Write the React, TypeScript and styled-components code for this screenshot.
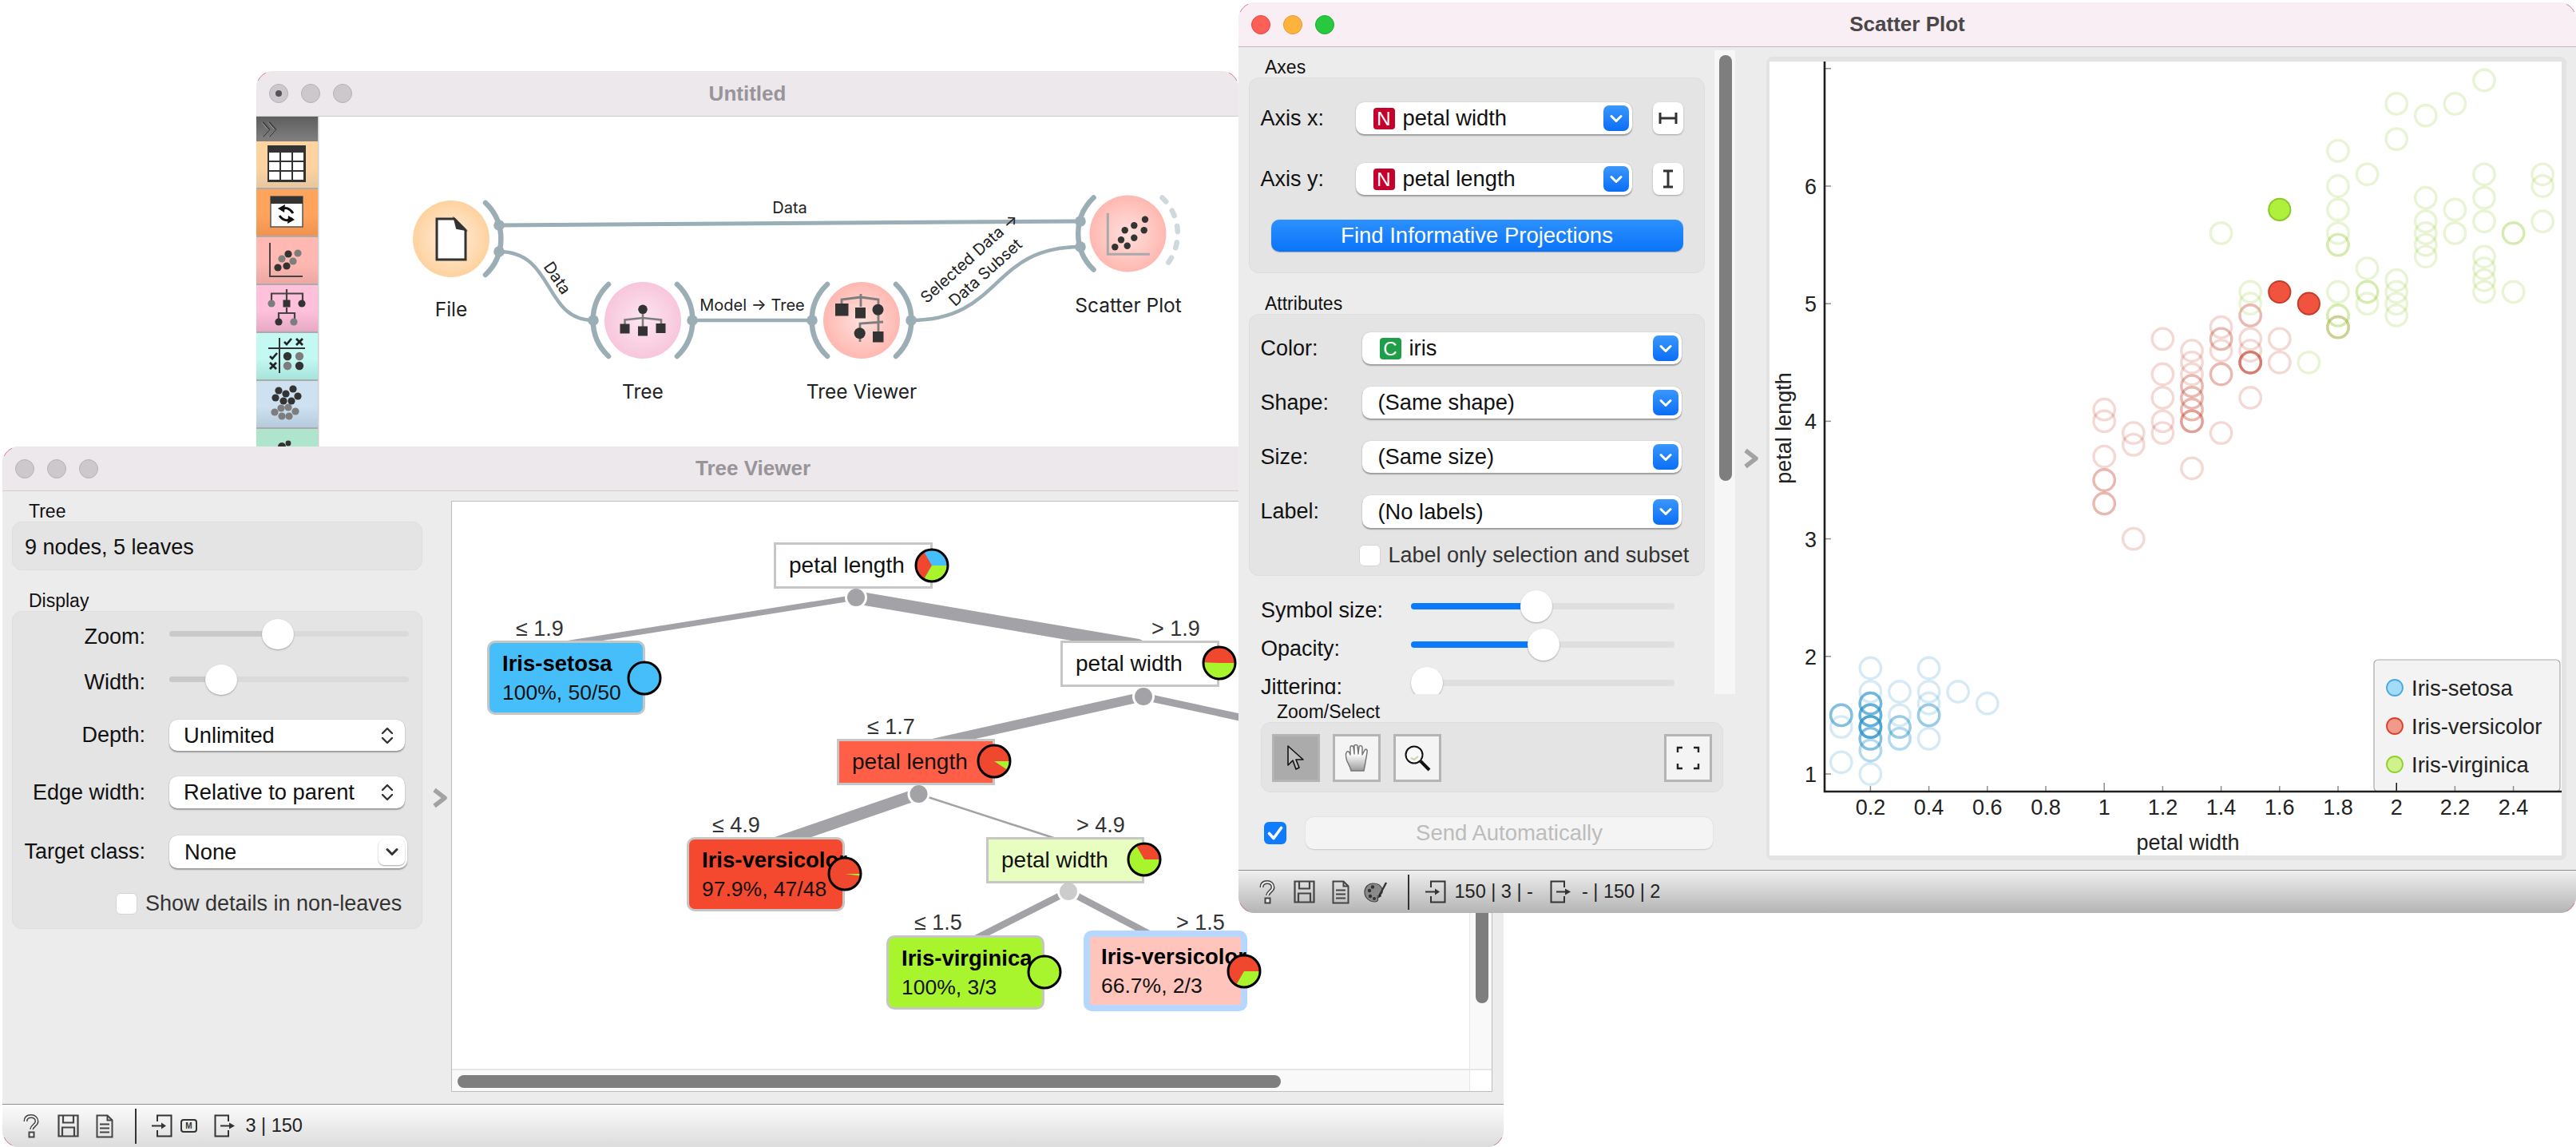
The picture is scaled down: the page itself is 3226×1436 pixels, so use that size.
import React from 'react';
import styled, { createGlobalStyle } from 'styled-components';

const UI = `"Liberation Sans", Arial, sans-serif`;
const CANVAS = `Inter, "Liberation Sans", sans-serif`;

const Global = createGlobalStyle`
  html, body { margin: 0; padding: 0; background: #fff; }
  body { font-family: ${UI}; color: #111; }
  #root { width: 3226px; height: 1436px; }
`;

const Desktop = styled.div`
  position: relative;
  width: 3226px;
  height: 1436px;
  overflow: hidden;
  background: #fff;
`;

const Window = styled.section<{ $x: number; $y: number; $w: number; $h: number; $z: number }>`
  position: absolute;
  left: ${p => p.$x}px;
  top: ${p => p.$y}px;
  width: ${p => p.$w}px;
  height: ${p => p.$h}px;
  z-index: ${p => p.$z};
  display: flex;
  flex-direction: column;
  border-radius: 20px;
  overflow: hidden;
  background: #ececec;

  &::after {
    content: '';
    position: absolute;
    inset: 0;
    z-index: 5;
    pointer-events: none;
    border: 1.5px solid #d9669f;
    border-radius: 20px;
    mask:
      linear-gradient(#000 0 0) top left / 12px 12px no-repeat,
      linear-gradient(#000 0 0) top right / 12px 12px no-repeat,
      linear-gradient(#000 0 0) bottom left / 12px 12px no-repeat,
      linear-gradient(#000 0 0) bottom right / 12px 12px no-repeat;
  }
`;

const TitleBar = styled.header<{ $focused?: boolean; $h: number }>`
  flex: 0 0 ${p => p.$h}px;
  box-sizing: border-box;
  display: grid;
  grid-template-columns: 1fr auto 1fr;
  align-items: center;
  padding: 0 16px;
  background: ${p => (p.$focused ? '#f9eef3' : '#ece8eb')};
  border-bottom: 1.5px solid ${p => (p.$focused ? '#bdb9bb' : '#cfcccd')};
`;

const Lights = styled.div`
  display: flex;
  gap: 16px;
`;

const Light = styled.span<{ $c: string; $b: string }>`
  width: 24px;
  height: 24px;
  box-sizing: border-box;
  border-radius: 50%;
  display: flex;
  align-items: center;
  justify-content: center;
  background: ${p => p.$c};
  border: 1px solid ${p => p.$b};
`;

const LightDot = styled.span`
  width: 8px;
  height: 8px;
  border-radius: 50%;
  background: #55525a;
`;

const WindowTitle = styled.h1<{ $focused?: boolean }>`
  margin: 0;
  font: bold 26px ${UI};
  color: ${p => (p.$focused ? '#4a4749' : '#98949a')};
`;

const StatusBar = styled.footer<{ $focused?: boolean }>`
  flex: 0 0 54px;
  box-sizing: border-box;
  display: flex;
  align-items: center;
  padding-left: 13px;
  border-top: 1.5px solid #8f8f8f;
  background: ${p =>
    p.$focused ? 'linear-gradient(#efefef, #b4b4b4)' : 'linear-gradient(#fbfbfb, #dcdcdc)'};
  font-size: 23.5px;
`;

const Slot = styled.span<{ $w: number; $ml?: number }>`
  flex: 0 0 ${p => p.$w}px;
  margin-left: ${p => p.$ml ?? 0}px;
  display: flex;
  align-items: center;
  justify-content: center;
`;

const StatusSep = styled.span<{ $ml: number }>`
  flex: 0 0 1.5px;
  height: 44px;
  margin-left: ${p => p.$ml}px;
  background: #333;
`;

const StatusText = styled.span<{ $ml: number }>`
  margin-left: ${p => p.$ml}px;
  color: #222;
  white-space: nowrap;
`;

const ModelBadge = styled.span`
  width: 17px;
  height: 13px;
  border: 2px solid #333;
  border-radius: 4px;
  font: bold 10px/13px ${UI};
  text-align: center;
  color: #333;
`;

/* ---------- status icons ---------- */
const HelpIcon = () => (
  <svg width="20" height="30" viewBox="0 0 20 30" fill="none">
    <path d="M3 9C3 4 6 2.5 10 2.5S17 5 17 9C17 13.5 11 14 10.5 19" stroke="#444" strokeWidth="5" />
    <path d="M3 9C3 4 6 2.5 10 2.5S17 5 17 9C17 13.5 11 14 10.5 19" stroke="#f4f4f4" strokeWidth="2" />
    <rect x="7.5" y="22.5" width="6" height="6" stroke="#444" strokeWidth="2" fill="#f4f4f4" />
  </svg>
);
const SaveIcon = () => (
  <svg width="27" height="29" viewBox="0 0 27 29" fill="none" stroke="#444" strokeWidth="2.2">
    <path d="M1.5 1.5H25.5V27.5H1.5Z" />
    <path d="M7 1.5V10.5H20V1.5" />
    <path d="M6 27.5V16.5H21V27.5" />
  </svg>
);
const ReportIcon = () => (
  <svg width="22" height="30" viewBox="0 0 22 30" fill="none" stroke="#444" strokeWidth="2">
    <path d="M1.5 1.5H14.5L20.5 7.5V28.5H1.5Z" />
    <path d="M14.5 1.5V7.5H20.5" />
    <path d="M5 12.5H17M5 17.5H17M5 22.5H17" />
  </svg>
);
const PaletteIcon = () => (
  <svg width="30" height="28" viewBox="0 0 30 28">
    <path d="M12 3C5 3 1 8 1 14C1 21 7 26 14 26C18 26 18 23 17 21C16 18 20 17 22 16C24 14 24 3 12 3Z" fill="#8a8a8a" stroke="#444" strokeWidth="1.2" />
    <circle cx="7" cy="12" r="2.2" fill="#333" />
    <circle cx="11" cy="7.5" r="2.2" fill="#333" />
    <circle cx="8" cy="19" r="2.2" fill="#333" />
    <circle cx="13" cy="22" r="2" fill="#333" />
    <path d="M28 2L20 17" stroke="#333" strokeWidth="2.4" />
    <path d="M20 15L17 22L22 19Z" fill="#222" />
  </svg>
);
const InputIcon = () => (
  <svg width="27" height="29" viewBox="0 0 27 29" fill="none" stroke="#333" strokeWidth="2">
    <path d="M8 9V1.5H25.5V27.5H8V20" />
    <path d="M1 14.5H15" />
    <path d="M13 10.5L19 14.5L13 18.5Z" fill="#333" stroke="none" />
  </svg>
);
const OutputIcon = () => (
  <svg width="27" height="29" viewBox="0 0 27 29" fill="none" stroke="#333" strokeWidth="2">
    <path d="M18 9V1.5H1.5V27.5H18V20" />
    <path d="M8 14.5H21" />
    <path d="M19 10.5L26 14.5L19 18.5Z" fill="#333" stroke="none" />
  </svg>
);

/* ---------- common controls ---------- */
const GroupLabel = styled.div<{ $ml: number }>`
  height: 26px;
  margin-left: ${p => p.$ml}px;
  font-size: 23px;
  line-height: 26px;
  color: #111;
`;

const GroupBox = styled.div<{ $w: number; $h: number; $ml: number }>`
  box-sizing: border-box;
  width: ${p => p.$w}px;
  height: ${p => p.$h}px;
  margin-left: ${p => p.$ml}px;
  background: #e4e4e4;
  border: 1px solid #dedede;
  border-radius: 12px;
`;

const Combo = styled.div<{ $w: number; $h?: number; $pl?: number }>`
  box-sizing: border-box;
  flex: 0 0 ${p => p.$w}px;
  width: ${p => p.$w}px;
  height: ${p => p.$h ?? 40}px;
  display: flex;
  align-items: center;
  padding-left: ${p => p.$pl ?? 20}px;
  padding-right: 4px;
  background: #fff;
  border-radius: 10px;
  box-shadow: 0 1.5px 1.5px rgba(0, 0, 0, 0.3), 0 0 1px rgba(0, 0, 0, 0.25);
  font-size: 27.3px;
  white-space: nowrap;
  color: #111;
`;

const ComboText = styled.span`
  flex: 1;
`;

const BlueArrow = styled.span`
  flex: 0 0 32px;
  height: 32px;
  border-radius: 7px;
  display: flex;
  align-items: center;
  justify-content: center;
  background: linear-gradient(#3a97fc, #0a6ef6);
`;

const PlainArrow = styled.span`
  flex: 0 0 33px;
  height: 32px;
  margin-right: -1px;
  box-sizing: border-box;
  border-radius: 7px;
  display: flex;
  align-items: center;
  justify-content: center;
  background: #fff;
  box-shadow: 0 1px 2px rgba(0, 0, 0, 0.35);
`;

const UpDown = styled.span`
  flex: 0 0 24px;
  margin-right: 6px;
  display: flex;
  justify-content: center;
`;

const VarBadge = styled.span<{ $c: string }>`
  flex: 0 0 27px;
  height: 27px;
  margin-right: 10px;
  border-radius: 4px;
  background: ${p => p.$c};
  color: #fff;
  font-size: 24px;
  line-height: 27px;
  text-align: center;
`;

const ChevronDown = ({ c = '#fff' }: { c?: string }) => (
  <svg width="16" height="11" viewBox="0 0 16 11" fill="none">
    <path d="M2 2.5L8 8.5L14 2.5" stroke={c} strokeWidth="3" strokeLinecap="round" strokeLinejoin="round" />
  </svg>
);

const UpDownIcon = () => (
  <svg width="16" height="24" viewBox="0 0 16 24" fill="none" stroke="#333" strokeWidth="2.4" strokeLinecap="round" strokeLinejoin="round">
    <path d="M2 9L8 3L14 9" />
    <path d="M2 15L8 21L14 15" />
  </svg>
);

const Check = styled.span`
  flex: 0 0 27px;
  height: 27px;
  box-sizing: border-box;
  background: #fff;
  border: 1px solid #d4d4d4;
  border-radius: 6px;
`;

const CheckLabel = styled.span`
  margin-left: 10px;
  font-size: 27px;
  line-height: 27px;
  color: #333;
  white-space: nowrap;
`;

const CollapseCol = styled.div<{ $w: number }>`
  flex: 0 0 ${p => p.$w}px;
  display: flex;
  align-items: center;
  justify-content: center;
`;

const CollapseChevron = () => (
  <svg width="20" height="26" viewBox="0 0 20 26" fill="none">
    <path d="M3 3L16 13L3 23" stroke="#a2a2a2" strokeWidth="5.5" strokeLinejoin="round" />
  </svg>
);

const SliderTrack = styled.div<{ $w: number; $h: number; $bg: string }>`
  position: relative;
  width: ${p => p.$w}px;
  height: ${p => p.$h}px;
  border-radius: ${p => p.$h / 2}px;
  background: ${p => p.$bg};
`;

const SliderFill = styled.div<{ $w: number; $bg: string }>`
  height: 100%;
  width: ${p => p.$w}px;
  border-radius: inherit;
  background: ${p => p.$bg};
`;

const Knob = styled.div<{ $c: number; $h: number }>`
  position: absolute;
  left: ${p => p.$c - 20}px;
  top: 50%;
  width: 40px;
  height: ${p => p.$h}px;
  margin-top: ${p => -p.$h / 2}px;
  border-radius: 50%;
  background: #fff;
  box-shadow: 0 1px 2px rgba(0, 0, 0, 0.3);
`;

/* ---------- canvas window ---------- */
const CanvasBody = styled.div`
  flex: 1;
  display: flex;
  min-height: 0;
  background: #fff;
`;

const Dock = styled.nav`
  flex: 0 0 77px;
  display: flex;
  flex-direction: column;
  overflow: hidden;
  border-right: 0;
  box-shadow: 1.5px 0 0 #d0d0d0;
  z-index: 1;
`;

const DockHeader = styled.div`
  flex: 0 0 31px;
  display: flex;
  align-items: center;
  padding-left: 6px;
  background: linear-gradient(#5e5e5e, #808080);
`;

const DockTile = styled.div<{ $top: string; $bot: string }>`
  flex: 0 0 58px;
  height: 58px;
  border-bottom: 2px solid #ababab;
  background: linear-gradient(${p => p.$top} 55%, ${p => p.$bot});
`;

const CanvasSvg = styled.svg`
  flex: 1;
  display: block;
  font-family: ${CANVAS};
`;

const C_D = '#333';
const C_G = '#7d7d7d';
const Dots = ({ list, fill, r = 4.6 }: { list: number[][]; fill: string; r?: number }) => (
  <>
    {list.map(([x, y], i) => (
      <circle key={i} cx={x} cy={y} r={r} fill={fill} />
    ))}
  </>
);

const TileSvg = ({ children }: { children: React.ReactNode }) => (
  <svg width="77" height="58" viewBox="0 0 77 58">
    {children}
  </svg>
);

const TableTile = () => (
  <TileSvg>
    <rect x="14" y="5" width="48" height="46" fill={C_D} />
    {[0, 1, 2].map(r =>
      [0, 1, 2].map(c => (
        <rect key={`${r}${c}`} x={16 + c * 15} y={14 + r * 12} width={13} height={10} fill="#fff" />
      )),
    )}
  </TileSvg>
);
const TransformTile = () => (
  <TileSvg>
    <rect x="18" y="9" width="40" height="38" fill="#fff" stroke="#555" strokeWidth="1.5" />
    <rect x="18" y="9" width="40" height="9" fill={C_D} />
    <path d="M31 26C36 21 42 24 46 30" fill="none" stroke="#111" strokeWidth="3" />
    <path d="M27 24L36 19L35 29Z" fill="#111" />
    <path d="M45 36C40 41 33 39 29 33" fill="none" stroke="#111" strokeWidth="3" />
    <path d="M48 38L39 43L40 33Z" fill="#111" />
  </TileSvg>
);
const ScatterTile = () => (
  <TileSvg>
    <path d="M17 7V49H58" fill="none" stroke="#444" strokeWidth="2" />
    <Dots list={[[27, 38], [38, 36], [40, 21]]} fill={C_D} />
    <Dots list={[[32, 27], [46, 30], [52, 20]]} fill={C_G} />
  </TileSvg>
);
const TreeTile = () => (
  <TileSvg>
    <path d="M38 5V23M19 23V10.5H58V23M38 28V35M28 46V35H48V46" fill="none" stroke="#444" strokeWidth="2.2" />
    <Dots list={[[57, 23], [28, 46]]} fill={C_D} />
    <Dots list={[[19, 23], [47, 46]]} fill={C_G} />
    <rect x="33.5" y="18.5" width="9" height="9" fill={C_D} />
  </TileSvg>
);
const ConfusionTile = () => {
  const mark = 'none';
  return (
    <TileSvg>
      <path d="M29 6V50M15 19H61" stroke="#333" strokeWidth="2" fill={mark} />
      <path d="M35 11L38 14L44 7M17 29L20 32L26 25" stroke="#222" strokeWidth="2.6" fill={mark} />
      <path d="M50 7L58 15M58 7L50 15M17 37L25 45M25 37L17 45" stroke="#222" strokeWidth="2.8" fill={mark} />
      <Dots list={[[39, 29], [54, 41]]} fill={C_D} r={5.2} />
      <Dots list={[[54, 29], [39, 41]]} fill={C_G} r={5.2} />
    </TileSvg>
  );
};
const ClusterTile = () => (
  <TileSvg>
    <Dots list={[[28, 12], [46, 10], [37, 16], [52, 19], [24, 21], [34, 25], [44, 25]]} fill={C_D} />
    <Dots list={[[31, 34], [40, 33], [23, 39], [49, 38], [32, 44], [41, 44]]} fill={C_G} />
  </TileSvg>
);
const LastTile = () => (
  <TileSvg>
    <Dots list={[[40, 18]]} fill={C_D} r={3.4} />
    <Dots list={[[32, 22]]} fill={C_D} r={5} />
  </TileSvg>
);

const Arc = ({ cx, cy, side, dashed }: { cx: number; cy: number; side: 1 | -1; dashed?: boolean }) => (
  <path
    d={`M${cx + side * 43} ${cy - 45}A62 62 0 0 ${side === 1 ? 1 : 0} ${cx + side * 43} ${cy + 45}`}
    fill="none"
    stroke={dashed ? '#cfd8dc' : '#9badb5'}
    strokeWidth="6.5"
    strokeLinecap="round"
    strokeDasharray={dashed ? '7 13.4' : undefined}
  />
);

const WidgetLabel = ({ x, y, children }: { x: number; y: number; children: string }) => (
  <text x={x} y={y} textAnchor="middle" fontSize="24.5" fill="#222">
    {children}
  </text>
);

const Workflow = () => (
  <CanvasSvg viewBox="398 146 1153 424" width="1153" height="424">
    <defs>
      <radialGradient id="gFile">
        <stop offset="0" stopColor="#ffeedd" />
        <stop offset="1" stopColor="#ffd29f" />
      </radialGradient>
      <radialGradient id="gTree">
        <stop offset="0" stopColor="#fce6f0" />
        <stop offset="1" stopColor="#f8c6dc" />
      </radialGradient>
      <radialGradient id="gVis">
        <stop offset="0" stopColor="#ffe0dc" />
        <stop offset="1" stopColor="#ffb8b1" />
      </radialGradient>
    </defs>
    <g fill="none" stroke="#9badb5">
      <path d="M625 282L1353 277" strokeWidth="5" />
      <path d="M625 315C695 315 680 401 743 401" strokeWidth="4.5" />
      <path d="M867 401H1017" strokeWidth="4.5" />
      <path d="M1141 401C1255 401 1240 309 1353 309" strokeWidth="4.5" />
    </g>
    <circle cx="565" cy="299" r="48" fill="url(#gFile)" />
    <circle cx="805" cy="401" r="48" fill="url(#gTree)" />
    <circle cx="1079" cy="401" r="48" fill="url(#gVis)" />
    <circle cx="1412.5" cy="292.5" r="48" fill="url(#gVis)" />
    <Arc cx={565} cy={299} side={1} />
    <Arc cx={805} cy={401} side={-1} />
    <Arc cx={805} cy={401} side={1} />
    <Arc cx={1079} cy={401} side={-1} />
    <Arc cx={1079} cy={401} side={1} />
    <Arc cx={1412.5} cy={292.5} side={-1} />
    <Arc cx={1412.5} cy={292.5} side={1} dashed />
    <Dots
      list={[[625, 282], [625, 315], [743, 401], [867, 401], [1017, 401], [1141, 401], [1353, 277], [1353, 309]]}
      fill="#9badb5"
      r={6.8}
    />
    {/* file */}
    <path d="M547 274H569L583 288V325H547Z" fill="#fff" stroke="#333" strokeWidth="3" />
    <path d="M569 274L583 288L572 286Z" fill="#333" stroke="#333" strokeWidth="2" />
    {/* tree */}
    <g stroke={C_G} strokeWidth="2.6" fill="none">
      <path d="M805 387V416M782.5 412V400.5L805 398L828 400.5V412" />
    </g>
    <circle cx="805" cy="387.3" r="5.8" fill={C_D} />
    <rect x="776.5" y="405.5" width="12" height="12" fill={C_D} />
    <rect x="799" y="408.5" width="12" height="12" fill={C_D} />
    <rect x="821.5" y="405" width="12" height="12" fill={C_D} />
    {/* tree viewer */}
    <g stroke={C_G} strokeWidth="2.8" fill="none">
      <path d="M1054 382V375L1078 372L1100 375V428M1078 368V384M1077 412V405L1106 403M1077 420V428" />
    </g>
    <rect x="1046" y="380" width="16.5" height="15.5" fill={C_D} />
    <rect x="1071" y="385" width="13" height="13.5" fill={C_D} />
    <circle cx="1099.5" cy="387.7" r="7" fill={C_D} />
    <circle cx="1076.7" cy="417.3" r="7" fill={C_D} />
    <rect x="1093" y="415" width="13.5" height="13.5" fill={C_D} />
    {/* scatter */}
    <path d="M1387.3 266.7V318.3H1440" fill="none" stroke="#a9a9a9" strokeWidth="3" />
    <Dots
      list={[[1396.3, 309.3], [1411.7, 307.7], [1404, 300.3], [1420.3, 297.7], [1408.7, 288.3], [1432.7, 288.3], [1420.3, 282.3], [1434, 274.7]]}
      fill={C_D}
      r={4.2}
    />
    <WidgetLabel x={565} y={396}>File</WidgetLabel>
    <WidgetLabel x={805} y={499}>Tree</WidgetLabel>
    <WidgetLabel x={1079} y={499}>Tree Viewer</WidgetLabel>
    <WidgetLabel x={1413} y={391}>Scatter Plot</WidgetLabel>
    <g fontSize="20" fill="#222" textAnchor="middle">
      <text x="989" y="267">Data</text>
      <text x="942" y="389">Model → Tree</text>
      <text transform="translate(698 348) rotate(56)" x="0" y="7">Data</text>
      <text transform="translate(1214 323) rotate(-42)" x="0" y="7">Selected Data →</text>
      <text transform="translate(1234 341) rotate(-42)" x="0" y="7">Data Subset</text>
    </g>
  </CanvasSvg>
);

/* ---------- tree viewer window ---------- */
const TreeBody = styled.div`
  flex: 1;
  display: flex;
  min-height: 0;
  padding-right: 14px;
`;

const TreePanel = styled.aside`
  flex: 0 0 534px;
  box-sizing: border-box;
  padding-top: 12px;
  font-size: 27px;
`;

const InfoText = styled.div`
  padding-left: 15px;
  line-height: 62px;
  font-size: 27px;
`;

const GroupGap = styled.div<{ $h: number }>`
  height: ${p => p.$h}px;
`;

const FormRow = styled.div<{ $mt: number }>`
  display: grid;
  grid-template-columns: 166px auto;
  column-gap: 30px;
  align-items: center;
  justify-content: start;
  margin-top: ${p => p.$mt}px;
`;

const FormLabel = styled.label<{ $pt?: number }>`
  justify-self: end;
  padding-top: ${p => p.$pt ?? 0}px;
  font-size: 27px;
  color: #111;
  white-space: nowrap;
`;

const SliderSlot = styled.div`
  height: 38px;
  display: flex;
  align-items: center;
`;

const CheckRow = styled.div<{ $ml: number; $mt: number }>`
  display: flex;
  align-items: center;
  margin-left: ${p => p.$ml}px;
  margin-top: ${p => p.$mt}px;
`;

const GraphFrame = styled.div`
  flex: 1;
  margin: 12px 0 15px;
  border: 1.5px solid #bdbdbd;
  display: grid;
  grid-template-columns: 1fr 28px;
  grid-template-rows: 1fr 28px;
  background: #fff;
  min-width: 0;
`;

const GraphArea = styled.div`
  position: relative;
  overflow: hidden;
`;

const EdgeSvg = styled.svg`
  position: absolute;
  left: 0;
  top: 0;
`;

const VScroll = styled.div`
  box-sizing: border-box;
  background: #f9f9f9;
  border-left: 1.5px solid #e6e6e6;
  padding: 0 6px 82px 7px;
  display: flex;
  flex-direction: column;
  justify-content: flex-end;
`;

const HScroll = styled.div`
  box-sizing: border-box;
  background: #f9f9f9;
  border-top: 2px solid #e6e6e6;
  padding: 6px 0 6px 7px;
`;

const VThumb = styled.div`
  width: 16px;
  height: 500px;
  border-radius: 8px;
  background: #7e7e7e;
`;

const HThumb = styled.div`
  width: 1031px;
  height: 16px;
  border-radius: 8px;
  background: #7e7e7e;
`;

const Corner = styled.div`
  background: #fff;
  border-left: 1.5px solid #e6e6e6;
  border-top: 2px solid #e6e6e6;
`;

const OX = 566;
const OY = 628;

const NodeBox = styled.div<{ $x: number; $y: number; $w: number; $h: number; $bg: string; $leaf?: boolean; $sel?: boolean }>`
  position: absolute;
  left: ${p => p.$x - OX}px;
  top: ${p => p.$y - OY}px;
  width: ${p => p.$w}px;
  height: ${p => p.$h}px;
  box-sizing: border-box;
  display: flex;
  flex-direction: column;
  justify-content: center;
  padding-left: ${p => (p.$sel ? 14 : 16)}px;
  background: ${p => p.$bg};
  border: ${p => (p.$sel ? '8px solid #b6d7ff' : '3px solid #c6c6c6')};
  border-radius: ${p => (p.$leaf ? 10 : 0)}px;
  white-space: nowrap;
  color: #000;
`;

const NodeTitle = styled.div`
  font-size: 27.5px;
  line-height: 36px;
  font-weight: bold;
`;

const NodeText = styled.div`
  font-size: 26.5px;
  line-height: 36px;
  color: #111;
`;

const NodeSplit = styled.div`
  font-size: 28px;
  line-height: 36px;
  color: #111;
`;

const EdgeLabel = styled.span<{ $x: number; $y: number }>`
  position: absolute;
  left: ${p => p.$x - OX}px;
  top: ${p => p.$y - OY - 16}px;
  font-size: 27px;
  line-height: 32px;
  color: #333;
  white-space: nowrap;
`;

const PieHolder = styled.svg<{ $x: number; $y: number }>`
  position: absolute;
  left: ${p => p.$x - OX - 22}px;
  top: ${p => p.$y - OY - 22}px;
  width: 44px;
  height: 44px;
`;

const BLUE = '#46befa';
const RED = '#f0482e';
const GREEN = '#a9f52d';

const wedge = (a0: number, a1: number, r = 20) => {
  const rad = (d: number) => (d * Math.PI) / 180;
  const x0 = 22 + r * Math.cos(rad(a0));
  const y0 = 22 - r * Math.sin(rad(a0));
  const x1 = 22 + r * Math.cos(rad(a1));
  const y1 = 22 - r * Math.sin(rad(a1));
  const large = a1 - a0 > 180 ? 1 : 0;
  return `M22 22L${x0} ${y0}A${r} ${r} 0 ${large} 0 ${x1} ${y1}Z`;
};

const Pie = ({ x, y, parts }: { x: number; y: number; parts: [string, number][] }) => {
  let a = 0;
  return (
    <PieHolder $x={x} $y={y} viewBox="0 0 44 44">
      <circle cx="22" cy="22" r="20" fill={parts[0][0]} />
      {parts.length > 1 &&
        parts.map(([c, span], i) => {
          const d = wedge(a, a + span);
          a += span;
          return <path key={i} d={d} fill={c} />;
        })}
      <circle cx="22" cy="22" r="20" fill="none" stroke="#000" strokeWidth="3" />
    </PieHolder>
  );
};

const edges: [number, number, number, number, number][] = [
  [1072, 748, 708, 806, 7],
  [1072, 748, 1425, 808, 16],
  [1432, 872, 1145, 936, 12],
  [1432, 872, 1752, 941, 9],
  [1150, 994, 958, 1060, 15],
  [1150, 994, 1338, 1055, 2.5],
  [1338, 1116, 1212, 1180, 8.5],
  [1338, 1116, 1456, 1178, 8.5],
];

const junctions: [number, number, string][] = [
  [1072, 748, '#a3a2a6'],
  [1432, 872, '#a3a2a6'],
  [1150.5, 994, '#a3a2a6'],
  [1338, 1116, '#cccccc'],
];

const TreeGraph = () => (
  <GraphArea>
    <EdgeSvg width="1400" height="800" viewBox={`${OX} ${OY} 1400 800`}>
      {edges.map(([a, b, c, d, w], i) => (
        <line key={i} x1={a} y1={b} x2={c} y2={d} stroke="#a3a2a6" strokeWidth={w} strokeLinecap="round" />
      ))}
      {junctions.map(([x, y, f], i) => (
        <circle key={i} cx={x} cy={y} r="12.5" fill={f} stroke="#fff" strokeWidth="3" />
      ))}
    </EdgeSvg>
    <EdgeLabel $x={646} $y={787}>≤ 1.9</EdgeLabel>
    <EdgeLabel $x={1442} $y={787}>&gt; 1.9</EdgeLabel>
    <EdgeLabel $x={1086} $y={910}>≤ 1.7</EdgeLabel>
    <EdgeLabel $x={892} $y={1033}>≤ 4.9</EdgeLabel>
    <EdgeLabel $x={1348} $y={1033}>&gt; 4.9</EdgeLabel>
    <EdgeLabel $x={1145} $y={1155}>≤ 1.5</EdgeLabel>
    <EdgeLabel $x={1473} $y={1155}>&gt; 1.5</EdgeLabel>

    <NodeBox $x={969} $y={679} $w={199} $h={58} $bg="#fff"><NodeSplit>petal length</NodeSplit></NodeBox>
    <Pie x={1167} y={708} parts={[[BLUE, 120], [RED, 120], [GREEN, 120]]} />

    <NodeBox $leaf $x={610} $y={802} $w={198} $h={93} $bg="#46befa">
      <NodeTitle>Iris-setosa</NodeTitle>
      <NodeText>100%, 50/50</NodeText>
    </NodeBox>
    <Pie x={807} y={849} parts={[[BLUE, 360]]} />

    <NodeBox $x={1328} $y={802} $w={199} $h={58} $bg="#fff"><NodeSplit>petal width</NodeSplit></NodeBox>
    <Pie x={1527} y={830} parts={[[RED, 178], [GREEN, 182]]} />

    <NodeBox $x={1048} $y={925} $w={198} $h={58} $bg="#ff5f47"><NodeSplit>petal length</NodeSplit></NodeBox>
    <Pie x={1245} y={953} parts={[[RED, 327], [GREEN, 33]]} />

    <NodeBox $leaf $x={860} $y={1048} $w={198} $h={93} $bg="#f5492f">
      <NodeTitle>Iris-versicolor</NodeTitle>
      <NodeText>97.9%, 47/48</NodeText>
    </NodeBox>
    <Pie x={1058} y={1094} parts={[[RED, 353], [GREEN, 7]]} />

    <NodeBox $x={1235} $y={1048} $w={198} $h={58} $bg="#e8fdc0"><NodeSplit>petal width</NodeSplit></NodeBox>
    <Pie x={1432.5} y={1076} parts={[[RED, 120], [GREEN, 240]]} />

    <NodeBox $leaf $x={1110} $y={1171} $w={198} $h={93} $bg="#a9f52d">
      <NodeTitle>Iris-virginica</NodeTitle>
      <NodeText>100%, 3/3</NodeText>
    </NodeBox>
    <Pie x={1308} y={1217} parts={[[GREEN, 360]]} />

    <NodeBox $leaf $sel $x={1357} $y={1165} $w={205} $h={101} $bg="#ffc4bc">
      <NodeTitle>Iris-versicolor</NodeTitle>
      <NodeText>66.7%, 2/3</NodeText>
    </NodeBox>
    <Pie x={1558} y={1216} parts={[[RED, 240], [GREEN, 120]]} />
  </GraphArea>
);

/* ---------- scatter window ---------- */
const ScatterBody = styled.div`
  flex: 1;
  display: flex;
  min-height: 0;
`;

const ControlCol = styled.aside`
  flex: 0 0 622px;
  display: flex;
  flex-direction: column;
`;

const ScrollArea = styled.div`
  flex: 0 0 810px;
  height: 810px;
  display: flex;
  overflow: hidden;
`;

const ScrollContent = styled.div`
  flex: 0 0 596px;
  box-sizing: border-box;
  padding-top: 12px;
  overflow: hidden;
`;

const ScrollBar = styled.div`
  flex: 0 0 26px;
  box-sizing: border-box;
  margin-top: 4px;
  padding: 6px 4px 0 6px;
  background: #f6f6f6;
`;

const ScrollThumb = styled.div`
  height: 533px;
  border-radius: 8px;
  background: #7e7e7e;
`;

const ControlRow = styled.div<{ $mt: number }>`
  display: flex;
  align-items: center;
  padding-left: 14px;
  margin-top: ${p => p.$mt}px;
`;

const RowLabel = styled.span<{ $w: number }>`
  flex: 0 0 ${p => p.$w}px;
  font-size: 27px;
  color: #111;
  white-space: nowrap;
`;

const AxisButton = styled.span`
  flex: 0 0 38px;
  height: 40px;
  margin-left: 26px;
  border-radius: 8px;
  background: #fff;
  box-shadow: 0 1px 2px rgba(0, 0, 0, 0.3);
  display: flex;
  align-items: center;
  justify-content: center;
`;

const PrimaryButton = styled.div`
  width: 516px;
  height: 40px;
  margin: 31px 0 0 27px;
  border-radius: 10px;
  background: linear-gradient(#2c90fd, #0a74fa);
  color: #fff;
  font-size: 27.5px;
  line-height: 40px;
  text-align: center;
  box-shadow: 0 0.5px 1px rgba(0, 0, 0, 0.3);
`;

const SliderRow = styled.div<{ $mt: number }>`
  height: 40px;
  display: flex;
  align-items: center;
  padding-left: 28px;
  margin-top: ${p => p.$mt}px;
`;

const SliderLabel = styled.span`
  flex: 0 0 188px;
  padding-top: 10px;
  font-size: 27px;
  color: #111;
  white-space: nowrap;
`;

const ToolRow = styled.div`
  display: flex;
  gap: 16px;
  padding: 14px 13px;
`;

const ToolButton = styled.span<{ $on?: boolean; $right?: boolean }>`
  flex: 0 0 60px;
  height: 60px;
  box-sizing: border-box;
  border: 3px solid #b4b4b4;
  background: ${p => (p.$on ? '#ababab' : '#f4f4f4')};
  margin-left: ${p => (p.$right ? 'auto' : '0')};
  display: flex;
  align-items: center;
  justify-content: center;
`;

const SendRow = styled.div`
  display: flex;
  align-items: center;
  gap: 24px;
  margin: 31px 0 0 32px;
`;

const BlueCheck = styled.span`
  flex: 0 0 28px;
  height: 28px;
  border-radius: 6px;
  background: #0f7bff;
  display: flex;
  align-items: center;
  justify-content: center;
`;

const SendButton = styled.div`
  width: 510px;
  height: 40px;
  border-radius: 10px;
  background: #f4f4f4;
  box-shadow: 0 0.5px 1.5px rgba(0, 0, 0, 0.15);
  color: #bcbcbc;
  font-size: 27.5px;
  line-height: 40px;
  text-align: center;
`;

const PlotFrame = styled.div`
  flex: 0 0 1002px;
  box-sizing: border-box;
  margin: 12px 12px 12px 0;
  padding: 6px 6px 6px 4px;
  border-radius: 8px;
  background: #e3e3e3;
`;

const PlotSvg = styled.svg`
  display: block;
  background: #fff;
  font-family: ${UI};
`;

const setosa = [[1.4,.2],[1.4,.2],[1.3,.2],[1.5,.2],[1.4,.2],[1.7,.4],[1.4,.3],[1.5,.2],[1.4,.2],[1.5,.1],[1.5,.2],[1.6,.2],[1.4,.1],[1.1,.1],[1.2,.2],[1.5,.4],[1.3,.4],[1.4,.3],[1.7,.3],[1.5,.3],[1.7,.2],[1.5,.4],[1.0,.2],[1.7,.5],[1.9,.2],[1.6,.2],[1.6,.4],[1.5,.2],[1.4,.2],[1.6,.2],[1.6,.2],[1.5,.4],[1.5,.1],[1.4,.2],[1.5,.1],[1.2,.2],[1.3,.2],[1.5,.1],[1.3,.2],[1.5,.2],[1.3,.3],[1.3,.3],[1.3,.2],[1.6,.6],[1.9,.4],[1.4,.3],[1.6,.2],[1.4,.2],[1.5,.2],[1.4,.2]];
const versicolor = [[4.7,1.4],[4.5,1.5],[4.9,1.5],[4.0,1.3],[4.6,1.5],[4.5,1.3],[4.7,1.6],[3.3,1.0],[4.6,1.3],[3.9,1.4],[3.5,1.0],[4.2,1.5],[4.0,1.0],[4.7,1.4],[3.6,1.3],[4.4,1.4],[4.5,1.5],[4.1,1.0],[4.5,1.5],[3.9,1.1],[4.8,1.8],[4.0,1.3],[4.9,1.5],[4.7,1.2],[4.3,1.3],[4.4,1.4],[4.8,1.4],[4.5,1.5],[3.5,1.0],[3.8,1.1],[3.7,1.0],[3.9,1.2],[4.5,1.5],[4.5,1.6],[4.7,1.5],[4.4,1.3],[4.1,1.3],[4.0,1.3],[4.4,1.2],[4.6,1.4],[4.0,1.2],[3.3,1.0],[4.2,1.3],[4.2,1.2],[4.2,1.3],[4.3,1.3],[3.0,1.1],[4.1,1.3]];
const virginica = [[6.0,2.5],[5.1,1.9],[5.9,2.1],[5.6,1.8],[5.8,2.2],[6.6,2.1],[4.5,1.7],[6.3,1.8],[5.8,1.8],[6.1,2.5],[5.1,2.0],[5.3,1.9],[5.5,2.1],[5.0,2.0],[5.1,2.4],[5.3,2.3],[5.5,1.8],[6.7,2.2],[6.9,2.3],[5.0,1.5],[5.7,2.3],[4.9,2.0],[6.7,2.0],[4.9,1.8],[5.7,2.1],[6.0,1.8],[4.8,1.8],[4.9,1.8],[5.6,2.1],[6.1,1.9],[6.4,2.0],[5.6,2.2],[5.1,1.5],[5.6,1.4],[6.1,2.3],[5.6,2.4],[5.5,1.8],[4.8,1.8],[5.4,2.1],[5.6,2.4],[5.1,2.3],[5.1,1.9],[5.9,2.3],[5.7,2.5],[5.2,2.3],[5.0,1.9],[5.2,2.0],[5.4,2.3],[5.1,1.8]];

const px = (w: number) => 2269.2 + 366 * w;
const py = (l: number) => 1116.2 - 147.2 * l;

const Markers = ({ list, stroke }: { list: number[][]; stroke: string }) => (
  <g fill="none" stroke={stroke} strokeWidth="3.4" strokeOpacity="0.2">
    {list.map(([l, w], i) => (
      <circle key={i} cx={px(w)} cy={py(l)} r="13.2" />
    ))}
  </g>
);

const xTicks = [0.2, 0.4, 0.6, 0.8, 1, 1.2, 1.4, 1.6, 1.8, 2, 2.2, 2.4];
const yTicks = [1, 2, 3, 4, 5, 6];

const Chart = () => (
  <PlotSvg viewBox="2216 77 992 994" width="992" height="994">
    <Markers list={setosa} stroke="#2f98cf" />
    <Markers list={versicolor} stroke="#c53b27" />
    <Markers list={virginica} stroke="#8bc825" />
    <circle cx={px(1.6)} cy={py(5.1)} r="13.6" fill="#f0543f" stroke="#c53b27" strokeWidth="2" />
    <circle cx={px(1.7)} cy={py(5.0)} r="13.6" fill="#f0543f" stroke="#c53b27" strokeWidth="2" />
    <circle cx={px(1.6)} cy={py(5.8)} r="13.6" fill="#aff03c" stroke="#8bc825" strokeWidth="2" />

    <rect x="2973" y="826" width="233" height="165" rx="5" fill="#f3f3f3" stroke="#a8a8a8" strokeWidth="1.2" />
    <g strokeWidth="1.8">
      <circle cx="2999" cy="861" r="10" fill="#a2dcf8" stroke="#4aa8da" />
      <circle cx="2999" cy="909" r="10" fill="#f19a8c" stroke="#d8402a" />
      <circle cx="2999" cy="957" r="10" fill="#cff28d" stroke="#93cf2a" />
    </g>
    <g fontSize="27.5" fill="#222">
      <text x="3020" y="871">Iris-setosa</text>
      <text x="3020" y="919">Iris-versicolor</text>
      <text x="3020" y="967">Iris-virginica</text>
    </g>

    <g stroke="#8e8e8e" strokeWidth="1.5">
      {xTicks.map(v => (
        <line key={v} x1={px(v)} x2={px(v)} y1={v === 1 || v === 2 ? 980 : 984} y2="991" stroke={v === 2 ? '#111' : undefined} />
      ))}
      {[...yTicks, 7].map(v => (
        <line key={v} x1="2285" x2="2293" y1={py(v)} y2={py(v)} />
      ))}
    </g>
    <path d="M2285 77V991H3208" fill="none" stroke="#1e1e1e" strokeWidth="2.6" />
    <g fontSize="27" fill="#222" textAnchor="middle">
      {xTicks.map(v => (
        <text key={v} x={px(v)} y="1020">{String(v)}</text>
      ))}
      <text x="2740" y="1064">petal width</text>
      <text transform="translate(2243 536) rotate(-90)">petal length</text>
    </g>
    <g fontSize="27" fill="#222" textAnchor="end">
      {yTicks.map(v => (
        <text key={v} x="2275" y={py(v) + 10}>{v}</text>
      ))}
    </g>
  </PlotSvg>
);

export default function App() {
  return (
    <Desktop>
      <Global />
      <Window $x={321} $y={89} $w={1230} $h={490} $z={1}>
        <TitleBar $h={57}>
          <Lights>
            <Light $c="#ccc8cb" $b="#b5b1b4"><LightDot /></Light>
            <Light $c="#ccc8cb" $b="#b5b1b4" />
            <Light $c="#ccc8cb" $b="#b5b1b4" />
          </Lights>
          <WindowTitle>Untitled</WindowTitle>
        </TitleBar>
        <CanvasBody>
          <Dock>
            <DockHeader>
              <svg width="26" height="22" viewBox="0 0 26 22" fill="none" stroke="#3f3f3f" strokeWidth="2.2">
                <path d="M2 2L10 11L2 20M10 2L18 11L10 20" />
                <path d="M1 2.5L9 11.5L1 20.5M9 2.5L17 11.5L9 20.5" stroke="#bdbdbd" strokeWidth="0.8" />
              </svg>
            </DockHeader>
            <DockTile $top="#ffd39f" $bot="#e6c7a0"><TableTile /></DockTile>
            <DockTile $top="#ffa45c" $bot="#ee9350"><TransformTile /></DockTile>
            <DockTile $top="#ffb8b2" $bot="#eda8a3"><ScatterTile /></DockTile>
            <DockTile $top="#ffc0dc" $bot="#e8a9c4"><TreeTile /></DockTile>
            <DockTile $top="#c4f8f3" $bot="#a6e4da"><ConfusionTile /></DockTile>
            <DockTile $top="#cde1f0" $bot="#b5cbdc"><ClusterTile /></DockTile>
            <DockTile $top="#afe5cc" $bot="#afe5cc"><LastTile /></DockTile>
          </Dock>
          <Workflow />
        </CanvasBody>
      </Window>

      <Window $x={3} $y={559} $w={1880} $h={877} $z={2}>
        <TitleBar $h={56}>
          <Lights>
            <Light $c="#ccc8cb" $b="#b5b1b4" />
            <Light $c="#ccc8cb" $b="#b5b1b4" />
            <Light $c="#ccc8cb" $b="#b5b1b4" />
          </Lights>
          <WindowTitle>Tree Viewer</WindowTitle>
        </TitleBar>
        <TreeBody>
          <TreePanel>
            <GroupLabel $ml={33}>Tree</GroupLabel>
            <GroupBox $w={514} $h={61} $ml={12}>
              <InfoText>9 nodes, 5 leaves</InfoText>
            </GroupBox>
            <GroupGap $h={25} />
            <GroupLabel $ml={33}>Display</GroupLabel>
            <GroupBox $w={514} $h={398} $ml={12}>
              <FormRow $mt={8}>
                <FormLabel $pt={8}>Zoom:</FormLabel>
                <SliderSlot>
                  <SliderTrack $w={300} $h={7} $bg="#dadada">
                    <SliderFill $w={136} $bg="#c9c9c9" />
                    <Knob $c={136} $h={38} />
                  </SliderTrack>
                </SliderSlot>
              </FormRow>
              <FormRow $mt={18}>
                <FormLabel $pt={8}>Width:</FormLabel>
                <SliderSlot>
                  <SliderTrack $w={300} $h={7} $bg="#dadada">
                    <SliderFill $w={65} $bg="#c9c9c9" />
                    <Knob $c={65} $h={38} />
                  </SliderTrack>
                </SliderSlot>
              </FormRow>
              <FormRow $mt={31}>
                <FormLabel>Depth:</FormLabel>
                <Combo $w={295} $h={39} $pl={18}>
                  <ComboText>Unlimited</ComboText>
                  <UpDown><UpDownIcon /></UpDown>
                </Combo>
              </FormRow>
              <FormRow $mt={32}>
                <FormLabel>Edge width:</FormLabel>
                <Combo $w={295} $pl={18}>
                  <ComboText>Relative to parent</ComboText>
                  <UpDown><UpDownIcon /></UpDown>
                </Combo>
              </FormRow>
              <FormRow $mt={34}>
                <FormLabel>Target class:</FormLabel>
                <Combo $w={298} $h={41} $pl={19}>
                  <ComboText>None</ComboText>
                  <PlainArrow><ChevronDown c="#333" /></PlainArrow>
                </Combo>
              </FormRow>
              <CheckRow $ml={129} $mt={31}>
                <Check />
                <CheckLabel>Show details in non-leaves</CheckLabel>
              </CheckRow>
            </GroupBox>
          </TreePanel>
          <CollapseCol $w={28}><CollapseChevron /></CollapseCol>
          <GraphFrame>
            <TreeGraph />
            <VScroll><VThumb /></VScroll>
            <HScroll><HThumb /></HScroll>
            <Corner />
          </GraphFrame>
        </TreeBody>
        <StatusBar>
          <Slot $w={46}><HelpIcon /></Slot>
          <Slot $w={46}><SaveIcon /></Slot>
          <Slot $w={46}><ReportIcon /></Slot>
          <StatusSep $ml={15} />
          <Slot $w={36} $ml={14}><InputIcon /></Slot>
          <Slot $w={32}><ModelBadge>M</ModelBadge></Slot>
          <Slot $w={36} $ml={11}><OutputIcon /></Slot>
          <StatusText $ml={8}>3 | 150</StatusText>
        </StatusBar>
      </Window>

      <Window $x={1551} $y={3} $w={1675} $h={1140} $z={3}>
        <TitleBar $focused $h={56}>
          <Lights>
            <Light $c="#ff5f57" $b="#e0443e" />
            <Light $c="#ffb23e" $b="#e09a2a" />
            <Light $c="#28c840" $b="#1aab29" />
          </Lights>
          <WindowTitle $focused>Scatter Plot</WindowTitle>
        </TitleBar>
        <ScatterBody>
          <ControlCol>
            <ScrollArea>
              <ScrollContent>
                <GroupLabel $ml={33}>Axes</GroupLabel>
                <GroupBox $w={571} $h={245} $ml={12.5}>
                  <ControlRow $mt={30}>
                    <RowLabel $w={119}>Axis x:</RowLabel>
                    <Combo $w={346} $pl={22}>
                      <VarBadge $c="#c4002c">N</VarBadge>
                      <ComboText>petal width</ComboText>
                      <BlueArrow><ChevronDown /></BlueArrow>
                    </Combo>
                    <AxisButton>
                      <svg width="24" height="18" viewBox="0 0 24 18" fill="none" stroke="#333" strokeWidth="3">
                        <path d="M2 2V16M22 2V16M2 9H22" />
                      </svg>
                    </AxisButton>
                  </ControlRow>
                  <ControlRow $mt={36}>
                    <RowLabel $w={119}>Axis y:</RowLabel>
                    <Combo $w={346} $pl={22}>
                      <VarBadge $c="#c4002c">N</VarBadge>
                      <ComboText>petal length</ComboText>
                      <BlueArrow><ChevronDown /></BlueArrow>
                    </Combo>
                    <AxisButton>
                      <svg width="16" height="24" viewBox="0 0 16 24" fill="none" stroke="#333" strokeWidth="3">
                        <path d="M2 2H14M2 22H14M8 2V22" />
                      </svg>
                    </AxisButton>
                  </ControlRow>
                  <PrimaryButton>Find Informative Projections</PrimaryButton>
                </GroupBox>
                <GroupGap $h={25} />
                <GroupLabel $ml={33}>Attributes</GroupLabel>
                <GroupBox $w={571} $h={328} $ml={12.5}>
                  <ControlRow $mt={22}>
                    <RowLabel $w={127}>Color:</RowLabel>
                    <Combo $w={400} $pl={22}>
                      <VarBadge $c="#1f9e49">C</VarBadge>
                      <ComboText>iris</ComboText>
                      <BlueArrow><ChevronDown /></BlueArrow>
                    </Combo>
                  </ControlRow>
                  <ControlRow $mt={28}>
                    <RowLabel $w={127}>Shape:</RowLabel>
                    <Combo $w={400}>
                      <ComboText>(Same shape)</ComboText>
                      <BlueArrow><ChevronDown /></BlueArrow>
                    </Combo>
                  </ControlRow>
                  <ControlRow $mt={28}>
                    <RowLabel $w={127}>Size:</RowLabel>
                    <Combo $w={400}>
                      <ComboText>(Same size)</ComboText>
                      <BlueArrow><ChevronDown /></BlueArrow>
                    </Combo>
                  </ControlRow>
                  <ControlRow $mt={28}>
                    <RowLabel $w={127}>Label:</RowLabel>
                    <Combo $w={400} $h={41}>
                      <ComboText>(No labels)</ComboText>
                      <BlueArrow><ChevronDown /></BlueArrow>
                    </Combo>
                  </ControlRow>
                  <CheckRow $ml={137} $mt={21}>
                    <Check />
                    <CheckLabel>Label only selection and subset</CheckLabel>
                  </CheckRow>
                </GroupBox>
                <SliderRow $mt={18}>
                  <SliderLabel>Symbol size:</SliderLabel>
                  <SliderTrack $w={330} $h={8} $bg="#dfdfdf">
                    <SliderFill $w={157} $bg="#0a7bff" />
                    <Knob $c={157} $h={40} />
                  </SliderTrack>
                </SliderRow>
                <SliderRow $mt={8}>
                  <SliderLabel>Opacity:</SliderLabel>
                  <SliderTrack $w={330} $h={8} $bg="#dfdfdf">
                    <SliderFill $w={166} $bg="#0a7bff" />
                    <Knob $c={166} $h={40} />
                  </SliderTrack>
                </SliderRow>
                <SliderRow $mt={8}>
                  <SliderLabel>Jittering:</SliderLabel>
                  <SliderTrack $w={330} $h={8} $bg="#dfdfdf">
                    <Knob $c={20} $h={40} />
                  </SliderTrack>
                </SliderRow>
              </ScrollContent>
              <ScrollBar><ScrollThumb /></ScrollBar>
            </ScrollArea>
            <GroupGap $h={9} />
            <GroupLabel $ml={48}>Zoom/Select</GroupLabel>
            <GroupBox $w={579} $h={88} $ml={28}>
              <ToolRow>
                <ToolButton $on>
                  <svg width="24" height="34" viewBox="0 0 24 34">
                    <path d="M2 2V26L8 20L12 31L16 29L12 19H21Z" fill="#bdbdbd" stroke="#111" strokeWidth="1.6" strokeLinejoin="round" />
                  </svg>
                </ToolButton>
                <ToolButton>
                  <svg width="32" height="36" viewBox="0 0 32 36">
                    <defs>
                      <linearGradient id="hand" x1="0" x2="0" y1="0" y2="1">
                        <stop offset="0.35" stopColor="#ffffff" />
                        <stop offset="1" stopColor="#9a9a9a" />
                      </linearGradient>
                    </defs>
                    <path d="M4 22C2 16 2 12 4 10C6 9 7 11 8 14L8 5C8 2 12 2 12 5L13 13L13 3C13 1 17 1 17 3L18 13L19 4C19 2 23 2 23 5L23 14L26 8C28 6 30 8 29 11C28 17 27 24 25 34H9C8 29 6 26 4 22Z" fill="url(#hand)" stroke="#777" strokeWidth="1.5" strokeLinejoin="round" />
                  </svg>
                </ToolButton>
                <ToolButton>
                  <svg width="34" height="34" viewBox="0 0 34 34" fill="none">
                    <circle cx="13" cy="13" r="10.5" stroke="#111" strokeWidth="2" fill="#f9f9f9" />
                    <path d="M9 17L13 19L18 15" stroke="#cfcfa8" strokeWidth="2" />
                    <path d="M21 21L32 32" stroke="#111" strokeWidth="4" />
                  </svg>
                </ToolButton>
                <ToolButton $right>
                  <svg width="30" height="30" viewBox="0 0 30 30" fill="none" stroke="#222" strokeWidth="2.4">
                    <path d="M8 2H2V8M22 2H28V8M2 22V28H8M28 22V28H22" />
                  </svg>
                </ToolButton>
              </ToolRow>
            </GroupBox>
            <SendRow>
              <BlueCheck>
                <svg width="20" height="18" viewBox="0 0 20 18" fill="none">
                  <path d="M2.5 9.5L8 15.5L17.5 2.5" stroke="#fff" strokeWidth="3.6" strokeLinecap="round" strokeLinejoin="round" />
                </svg>
              </BlueCheck>
              <SendButton>Send Automatically</SendButton>
            </SendRow>
          </ControlCol>
          <CollapseCol $w={39}><CollapseChevron /></CollapseCol>
          <PlotFrame><Chart /></PlotFrame>
        </ScatterBody>
        <StatusBar $focused>
          <Slot $w={46}><HelpIcon /></Slot>
          <Slot $w={46}><SaveIcon /></Slot>
          <Slot $w={46}><ReportIcon /></Slot>
          <Slot $w={42}><PaletteIcon /></Slot>
          <StatusSep $ml={19} />
          <Slot $w={36} $ml={15}><InputIcon /></Slot>
          <StatusText $ml={6}>150 | 3 | -</StatusText>
          <Slot $w={36} $ml={17}><OutputIcon /></Slot>
          <StatusText $ml={8}>- | 150 | 2</StatusText>
        </StatusBar>
      </Window>
    </Desktop>
  );
}
